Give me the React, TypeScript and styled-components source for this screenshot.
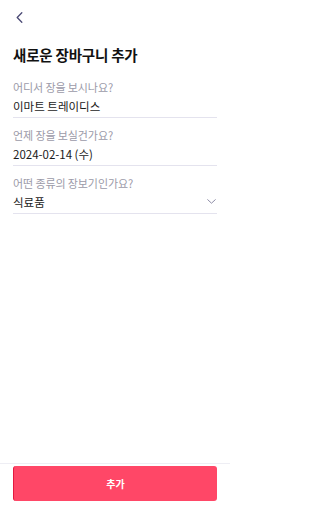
import React from 'react'
import styled, { createGlobalStyle } from 'styled-components'

const GlobalStyle = createGlobalStyle`
  html, body {
    margin: 0;
    padding: 0;
    background: #ffffff;
  }
  body {
    font-family: 'Noto Sans CJK KR', 'Noto Sans', sans-serif;
    -webkit-font-smoothing: antialiased;
  }
`

const Screen = styled.div`
  display: flex;
  flex-direction: column;
  width: 230px;
  height: 512px;
  box-sizing: border-box;
`

const Header = styled.header`
  display: flex;
  align-items: center;
  height: 34px;
  padding: 0 14px;
  box-sizing: border-box;
`

const BackButton = styled.button`
  display: flex;
  align-items: center;
  justify-content: center;
  width: 10px;
  height: 20px;
  padding: 0;
  border: none;
  background: none;
  color: #4b4a75;
`

const Body = styled.main`
  flex: 1;
  display: flex;
  flex-direction: column;
  padding: 11px 13px 0;
`

const Title = styled.h1`
  margin: 0 0 15px;
  font-size: 14.5px;
  line-height: 20px;
  font-weight: 700;
  color: #111111;
  letter-spacing: -0.2px;
`

const Field = styled.div`
  display: flex;
  flex-direction: column;
  border-bottom: 1px solid #e4e3ee;
  margin-bottom: 10px;
`

const Label = styled.label`
  font-size: 11px;
  line-height: 14px;
  color: #9b9aa8;
  letter-spacing: -0.1px;
`

const ValueRow = styled.div`
  display: flex;
  align-items: center;
  justify-content: space-between;
  height: 23px;
`

const Value = styled.span`
  font-size: 11.5px;
  color: #1a1a1a;
  letter-spacing: 0;
`

const Caret = styled.span`
  display: flex;
  margin-right: 1px;
  color: #8d8ca6;
`

const Footer = styled.footer`
  border-top: 1px solid #eeeef4;
  padding: 2px 13px 11px;
`

const SubmitButton = styled.button`
  width: 100%;
  height: 35px;
  border: none;
  border-left: 1px solid #e3193f;
  border-radius: 3px;
  background: #ff4767;
  color: #ffffff;
  font-family: 'Noto Sans CJK KR', 'Noto Sans', sans-serif;
  font-size: 10px;
  font-weight: 700;
`

const fields = [
  { label: '어디서 장을 보시나요?', value: '이마트 트레이디스' },
  { label: '언제 장을 보실건가요?', value: '2024-02-14 (수)' },
  { label: '어떤 종류의 장보기인가요?', value: '식료품', select: true },
]

const App = () => {
  return (
    <Screen>
      <GlobalStyle />
      <Header>
        <BackButton aria-label="뒤로">
          <svg width="7" height="11" viewBox="0 0 7 11" fill="none">
            <path d="M5.8 0.8L1.2 5.5l4.6 4.7" stroke="currentColor" strokeWidth="1.3" strokeLinecap="round" strokeLinejoin="round" />
          </svg>
        </BackButton>
      </Header>
      <Body>
        <Title>새로운 장바구니 추가</Title>
        {fields.map((f) => (
          <Field key={f.label}>
            <Label>{f.label}</Label>
            <ValueRow>
              <Value>{f.value}</Value>
              {f.select && (
                <Caret>
                  <svg width="9" height="5" viewBox="0 0 9 5" fill="none">
                    <path d="M0.7 0.7L4.5 4.2 8.3 0.7" stroke="currentColor" strokeWidth="1" strokeLinecap="round" strokeLinejoin="round" />
                  </svg>
                </Caret>
              )}
            </ValueRow>
          </Field>
        ))}
      </Body>
      <Footer>
        <SubmitButton>추가</SubmitButton>
      </Footer>
    </Screen>
  )
}

export default App
